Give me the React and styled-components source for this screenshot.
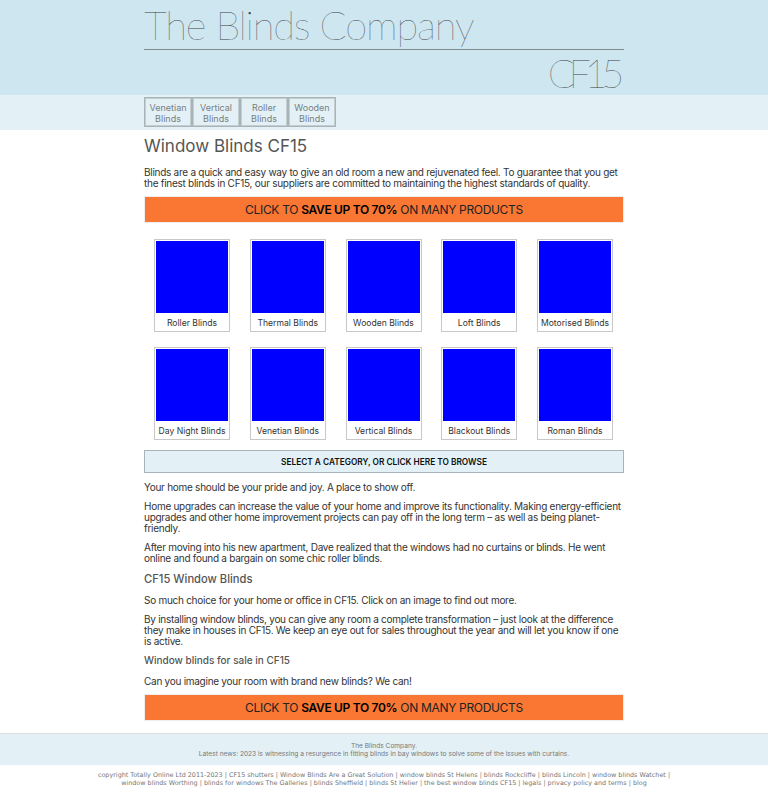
import React from "react";
import styled, { createGlobalStyle } from "styled-components";

const TOP_ROW = ["Roller Blinds", "Thermal Blinds", "Wooden Blinds", "Loft Blinds", "Motorised Blinds"];
const BOTTOM_ROW = ["Day Night Blinds", "Venetian Blinds", "Vertical Blinds", "Blackout Blinds", "Roman Blinds"];
const NAV = ["Venetian", "Vertical", "Roller", "Wooden"];

const Global = createGlobalStyle`
  body {
    margin: 0;
    background: #fff;
    font-family: Inter, "Liberation Sans", sans-serif;
    font-size: 10px;
    color: #333;
  }
  #root {
    opacity: 0.999;
  }
`;

const Header = styled.header`
  background: #cee6f0;
  height: 95px;
`;

const Inner = styled.div`
  width: 480px;
  margin: 0 auto;
`;

const Title = styled.div`
  height: 49px;
  border-bottom: 1px solid #7f8c8d;
  font-family: Lato, sans-serif;
  font-weight: 100;
  font-size: 40px;
  line-height: 51px;
  letter-spacing: -1.2px;
  color: #3c4244;
  white-space: nowrap;
`;

const Area = styled.div`
  height: 45px;
  padding-right: 6px;
  text-align: right;
  font-family: Lato, sans-serif;
  font-weight: 100;
  font-size: 40px;
  line-height: 47px;
  letter-spacing: -6.5px;
  color: #3c4244;
`;

const NavBar = styled.nav`
  background: #e3f1f7;
  height: 35px;
`;

const NavRow = styled.div`
  display: flex;
  padding-top: 2px;
`;

const NavItem = styled.a`
  box-sizing: border-box;
  width: 48px;
  height: 30px;
  border: 1px solid #a9b4b8;
  outline: 1px solid #c4ced2;
  outline-offset: -2px;
  text-align: center;
  font-size: 9px;
  line-height: 11px;
  padding-top: 4px;
  color: #77807f;
`;

const Main = styled.main`
  padding-top: 6px;
`;

const Heading = styled.h1`
  margin: 0;
  font-size: 17px;
  line-height: 20px;
  font-weight: 400;
  color: #555;
`;

const Para = styled.p`
  margin: ${({ $top }) => $top || 0}px 0 0;
  font-size: 10px;
  line-height: 11px;
  letter-spacing: -0.27px;
  color: #333;
  white-space: nowrap;
`;

const Cta = styled.a`
  display: block;
  box-sizing: border-box;
  height: 27px;
  margin-top: ${({ $top }) => $top}px;
  background: #f97733;
  border: 1px solid #eee;
  text-align: center;
  font-size: 12px;
  letter-spacing: -0.32px;
  line-height: 25px;
  color: #222;
  b {
    font-weight: 600;
    color: #000;
  }
`;

const Grid = styled.div`
  display: grid;
  grid-template-columns: repeat(5, 76px);
  justify-content: space-between;
  padding: 0 11px 0 10px;
  row-gap: 15px;
  margin-top: 16px;
`;

const Card = styled.a`
  box-sizing: border-box;
  height: 93px;
  border: 1px solid #c8c8c8;
  padding: 1px;
  text-align: center;
`;

const Swatch = styled.div`
  height: 72px;
  background: #0000ff;
`;

const CardLabel = styled.div`
  font-size: 8.6px;
  line-height: 11px;
  margin-top: 5px;
  white-space: nowrap;
  color: #333;
`;

const Browse = styled.a`
  display: block;
  box-sizing: border-box;
  height: 23px;
  margin-top: 10px;
  background: #e3f1f7;
  border: 1px solid #a9b4b8;
  text-align: center;
  font-size: 8.3px;
  font-weight: 600;
  line-height: 22px;
  color: #111;
`;

const Sub = styled.h2`
  margin: ${({ $top }) => $top}px 0 0;
  font-size: ${({ $size }) => $size}px;
  line-height: 14px;
  font-weight: 500;
  color: #555;
`;

const NewsBand = styled.div`
  margin-top: 12px;
  background: #e3f1f7;
  border-top: 1px solid #ddd;
  height: 31px;
  text-align: center;
  font-size: 6.6px;
  line-height: 8px;
  color: #777;
`;

const NewsText = styled.div`
  padding-top: 8px;
`;

const Links = styled.div`
  margin-top: 6px;
  text-align: center;
  font-family: "DejaVu Sans", sans-serif;
  font-size: 6.42px;
  line-height: 8px;
  color: #777;
`;

export default function App() {
  return (
    <>
      <Global />
      <Header>
        <Inner>
          <Title>The Blinds Company</Title>
          <Area>CF15</Area>
        </Inner>
      </Header>
      <NavBar>
        <Inner>
          <NavRow>
            {NAV.map((n) => (
              <NavItem key={n}>
                {n}
                <br />
                Blinds
              </NavItem>
            ))}
          </NavRow>
        </Inner>
      </NavBar>
      <Main>
        <Inner>
          <Heading>Window Blinds CF15</Heading>
          <Para $top={11}>
            Blinds are a quick and easy way to give an old room a new and rejuvenated feel. To guarantee that you get
            <br />
            the finest blinds in CF15, our suppliers are committed to maintaining the highest standards of quality.
          </Para>
          <Cta $top={7}>
            CLICK TO <b>SAVE UP TO 70%</b> ON MANY PRODUCTS
          </Cta>
          <Grid>
            {[...TOP_ROW, ...BOTTOM_ROW].map((name) => (
              <Card key={name}>
                <Swatch />
                <CardLabel>{name}</CardLabel>
              </Card>
            ))}
          </Grid>
          <Browse>SELECT A CATEGORY, OR CLICK HERE TO BROWSE</Browse>
          <Para $top={9}>Your home should be your pride and joy. A place to show off.</Para>
          <Para $top={8}>
            Home upgrades can increase the value of your home and improve its functionality. Making energy-efficient
            <br />
            upgrades and other home improvement projects can pay off in the long term – as well as being planet-
            <br />
            friendly.
          </Para>
          <Para $top={8}>
            After moving into his new apartment, Dave realized that the windows had no curtains or blinds. He went
            <br />
            online and found a bargain on some chic roller blinds.
          </Para>
          <Sub $top={8} $size={11.2}>CF15 Window Blinds</Sub>
          <Para $top={9}>So much choice for your home or office in CF15. Click on an image to find out more.</Para>
          <Para $top={8}>
            By installing window blinds, you can give any room a complete transformation – just look at the difference
            <br />
            they make in houses in CF15. We keep an eye out for sales throughout the year and will let you know if one
            <br />
            is active.
          </Para>
          <Sub $top={6} $size={10}>Window blinds for sale in CF15</Sub>
          <Para $top={9}>Can you imagine your room with brand new blinds? We can!</Para>
          <Cta $top={7}>
            CLICK TO <b>SAVE UP TO 70%</b> ON MANY PRODUCTS
          </Cta>
        </Inner>
      </Main>
      <NewsBand>
        <NewsText>
          The Blinds Company.
          <br />
          Latest news: 2023 is witnessing a resurgence in fitting blinds in bay windows to solve some of the issues with
          curtains.
        </NewsText>
      </NewsBand>
      <Links>
        copyright Totally Online Ltd 2011-2023 | CF15 shutters | Window Blinds Are a Great Solution | window blinds St
        Helens | blinds Rockcliffe | blinds Lincoln | window blinds Watchet |
        <br />
        window blinds Worthing | blinds for windows The Galleries | blinds Sheffield | blinds St Helier | the best window
        blinds CF15 | legals | privacy policy and terms | blog
      </Links>
    </>
  );
}
